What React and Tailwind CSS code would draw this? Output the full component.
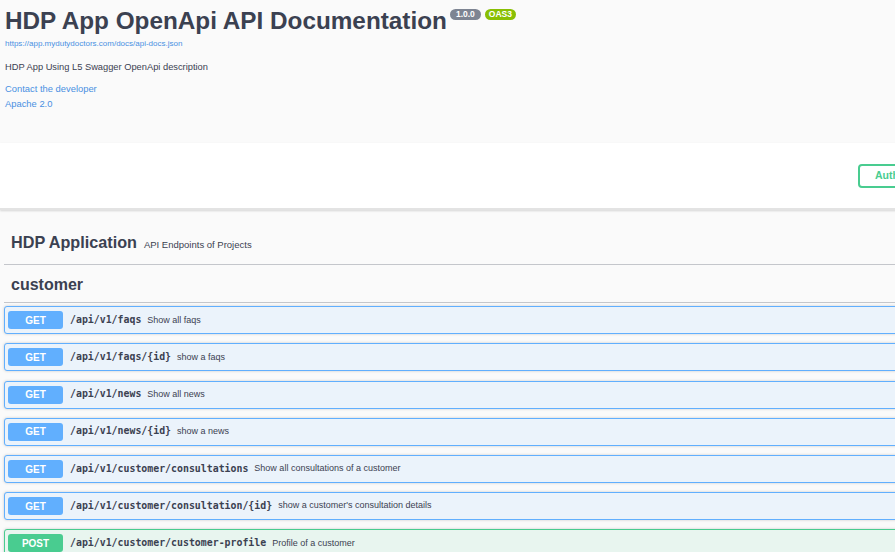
import React from 'react';

const endpoints = [
  { method: 'GET', path: '/api/v1/faqs', desc: 'Show all faqs' },
  { method: 'GET', path: '/api/v1/faqs/{id}', desc: 'show a faqs' },
  { method: 'GET', path: '/api/v1/news', desc: 'Show all news' },
  { method: 'GET', path: '/api/v1/news/{id}', desc: 'show a news' },
  { method: 'GET', path: '/api/v1/customer/consultations', desc: 'Show all consultations of a customer' },
  { method: 'GET', path: '/api/v1/customer/consultation/{id}', desc: "show a customer's consultation details" },
  { method: 'POST', path: '/api/v1/customer/customer-profile', desc: 'Profile of a customer' },
];

const styles = {
  GET: {
    block: 'border-[#61affe] bg-[#ebf3fb]',
    badge: 'bg-[#61affe]',
  },
  POST: {
    block: 'border-[#49cc90] bg-[#e8f5ef]',
    badge: 'bg-[#49cc90]',
  },
};

const Operation = ({ method, path, desc }) => {
  const s = styles[method];
  return (
    <div className={`flex items-center h-[28px] mb-[9.2px] pl-[3px] border rounded-[3px] shadow-[0_0_3px_rgba(0,0,0,0.19)] ${s.block}`}>
      <span className={`flex items-center justify-center w-[55px] h-[18px] rounded-[3px] text-white font-bold text-[10px] ${s.badge}`}>
        {method}
      </span>
      <span className="ml-[7px] font-['DejaVu_Sans_Mono',monospace] font-bold text-[9.9px] text-[#3b4151]">
        {path}
      </span>
      <span className="ml-[6px] text-[9px] text-[#3b4151]">{desc}</span>
    </div>
  );
};

export default function App() {
  return (
    <div className="w-[895px] h-[552px] overflow-hidden bg-[#fafafa] font-['Liberation_Sans',Arial,sans-serif] text-[#3b4151]">
      <div className="w-[1100px]">
        {/* Info */}
        <div className="h-[143px] pt-[9px] pl-[5px]">
          <div className="flex items-start">
            <h2 className="text-[24.3px] leading-[24px] font-bold">HDP App OpenApi API Documentation</h2>
            <div className="flex gap-[4px] ml-[3px]">
              <span className="flex items-center justify-center w-[31px] h-[11px] rounded-full bg-[#7d8492] text-white text-[8.5px] font-bold">1.0.0</span>
              <span className="flex items-center justify-center w-[31px] h-[11px] rounded-full bg-[#89bf04] text-white text-[8.5px] font-bold">OAS3</span>
            </div>
          </div>
          <a className="block mt-[6px] text-[8px] leading-[10px] text-[#4990e2]">https://app.mydutydoctors.com/docs/api-docs.json</a>
          <p className="mt-[13px] text-[9.3px] leading-[11px]">HDP App Using L5 Swagger OpenApi description</p>
          <div className="mt-[8px] text-[9.4px] leading-[15px] text-[#4990e2]">
            <a className="block">Contact the developer</a>
            <a className="block">Apache 2.0</a>
          </div>
        </div>

        {/* Scheme container */}
        <div className="h-[67px] flex items-center pl-[858px] bg-white border-b-2 border-[#e3e3e3] shadow-[0_1px_2px_0_rgba(0,0,0,0.15)]">
          <button className="flex items-center gap-[6px] h-[24px] px-[15px] border-2 border-[#49cc90] rounded-[4px] text-[#49cc90] text-[10.5px] font-bold bg-transparent">
            Authorize
            <svg width="12" height="12" viewBox="0 0 20 20" fill="#49cc90">
              <path d="M15.8 8H14V5.6C14 2.703 12.665 1 10 1 7.334 1 6 2.703 6 5.6V8H4c-.553 0-1 .646-1 1.199V17c0 .549.428 1.139.951 1.307l1.197.387C5.672 18.861 6.55 19 7.1 19h5.8c.549 0 1.428-.139 1.951-.307l1.196-.387c.524-.167.953-.757.953-1.306V9.199C17 8.646 16.352 8 15.8 8zM12 8H8V5.199C8 3.754 8.797 3 10 3s2 .754 2 2.199V8z" />
            </svg>
          </button>
        </div>

        {/* Operations */}
        <div className="px-[4px]">
          <div className="flex items-baseline pt-[22px] pb-[12px] pl-[7px] border-b border-[#c4c6cb]">
            <h3 className="text-[16.2px] leading-[20px] font-bold">HDP Application</h3>
            <small className="ml-[7px] text-[9.5px]">API Endpoints of Projects</small>
          </div>
          <div className="pt-[10px] pb-[7px] pl-[7px] border-b border-[#c4c6cb]">
            <h3 className="text-[16px] leading-[20px] font-bold">customer</h3>
          </div>
          <div className="mt-[3px]">
            {endpoints.map((e) => (
              <Operation key={e.path} {...e} />
            ))}
          </div>
        </div>
      </div>
    </div>
  );
}
